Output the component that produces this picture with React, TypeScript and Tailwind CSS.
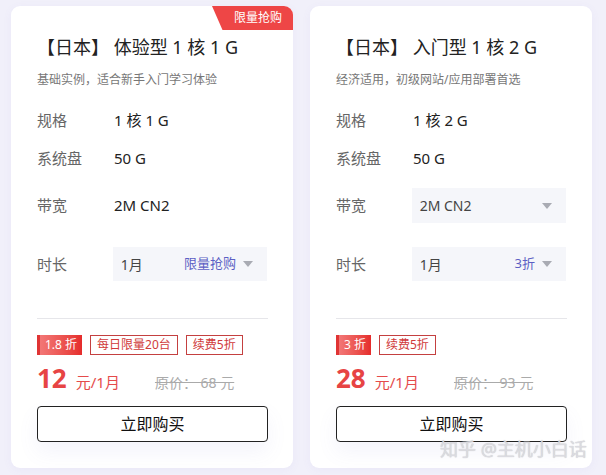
import React from "react";

const font = { fontFamily: '"Noto Sans", "Noto Sans CJK SC", sans-serif' };

type Plan = {
  title: string;
  desc: string;
  spec: string;
  disk: string;
  bw: string;
  bwSelect: boolean;
  tag: string;
  discount: string;
  badges: string[];
  price: string;
  orig: string;
  ribbon: boolean;
};

const plans: Plan[] = [
  {
    title: "【日本】 体验型 1 核 1 G",
    desc: "基础实例，适合新手入门学习体验",
    spec: "1 核 1 G",
    disk: "50 G",
    bw: "2M CN2",
    bwSelect: false,
    tag: "限量抢购",
    discount: "1.8 折",
    badges: ["每日限量20台", "续费5折"],
    price: "12",
    orig: "原价： 68 元",
    ribbon: true,
  },
  {
    title: "【日本】 入门型 1 核 2 G",
    desc: "经济适用，初级网站/应用部署首选",
    spec: "1 核 2 G",
    disk: "50 G",
    bw: "2M CN2",
    bwSelect: true,
    tag: "3折",
    discount: "3 折",
    badges: ["续费5折"],
    price: "28",
    orig: "原价： 93 元",
    ribbon: false,
  },
];

function Caret() {
  return <span className="ml-[7px] inline-block w-0 h-0 border-l-[5px] border-r-[5px] border-t-[6px] border-l-transparent border-r-transparent border-t-[#a9abb3]" />;
}

function Card({ p }: { p: Plan }) {
  return (
    <div className="relative w-[282px] h-[462px] bg-white rounded-[9px] shadow-[0_2px_10px_rgba(120,110,200,0.06)] overflow-hidden px-[26px] pt-[29px]">
      {p.ribbon && (
        <div className="absolute top-0 right-0 w-[81px] h-[24px] bg-[#ee4646] text-white text-[12px] leading-[24px] text-right pr-[11px] [clip-path:polygon(0_0,100%_0,100%_100%,13%_100%)]">
          限量抢购
        </div>
      )}
      <div className="text-[18px] leading-[24px] text-[#222]">{p.title}</div>
      <div className="mt-[12px] text-[12px] leading-[18px] text-[#777]">{p.desc}</div>

      <div className="mt-[19px] flex items-center h-[24px] text-[15px]">
        <span className="w-[77px] text-[#666]">规格</span>
        <span className="text-[#222]">{p.spec}</span>
      </div>
      <div className="mt-[14px] flex items-center h-[24px] text-[15px]">
        <span className="w-[77px] text-[#666]">系统盘</span>
        <span className="text-[#222]">{p.disk}</span>
      </div>
      <div className="mt-[18px] flex items-center h-[35px] text-[15px]">
        <span className="w-[76px] text-[#666]">带宽</span>
        {p.bwSelect ? (
          <div className="flex items-center w-[155px] h-[35px] bg-[#f5f6fa] px-[8px] text-[14px] text-[#444]">
            <span className="flex-1">{p.bw}</span>
            <Caret />
            <span className="w-[6px]" />
          </div>
        ) : (
          <span className="text-[#222] pl-[1px]">{p.bw}</span>
        )}
      </div>
      <div className="mt-[24px] flex items-center h-[34px] text-[15px]">
        <span className="w-[76px] text-[#666]">时长</span>
        <div className="flex items-center w-[155px] h-[34px] bg-[#f5f6fa] px-[8px] text-[14px] text-[#444]">
          <span className="flex-1">1月</span>
          <span className="text-[13px] text-[#5c5fc4]">{p.tag}</span>
          <Caret />
          <span className="w-[6px]" />
        </div>
      </div>

      <div className="mt-[37px] w-[231px] border-t border-[#e6e6ea]" />

      <div className="mt-[16px] flex items-center gap-[8px] h-[20px]">
        <span className="h-[20px] px-[5px] border-l-[3px] border-l-[#e03434] bg-gradient-to-r from-[#f27676] to-[#e52b2b] text-white text-[12px] leading-[20px]">
          {p.discount}
        </span>
        {p.badges.map((b) => (
          <span key={b} className="h-[20px] px-[6px] border border-[#c44040] text-[#d03a3a] text-[12px] leading-[18px]">
            {b}
          </span>
        ))}
      </div>

      <div className="mt-[8px] flex items-baseline h-[30px]">
        <span className="text-[26px] font-bold text-[#e74444] leading-[30px]">{p.price}</span>
        <span className="ml-[9px] text-[15px] text-[#e54b4b]">元/1月</span>
        <span className="ml-[35px] text-[14px] text-[#aaa] line-through">{p.orig}</span>
      </div>

      <button className="mt-[13px] w-[231px] h-[36px] border border-[#222] rounded-[4px] bg-white text-[16px] text-[#111] shadow-[0_10px_20px_rgba(120,110,200,0.08)]">
        立即购买
      </button>
    </div>
  );
}

export default function App() {
  return (
    <div style={font} className="relative w-[606px] h-[475px] bg-[#f1f0fa] flex gap-[17px] pl-[11px] pt-[6px] overflow-hidden">
      {plans.map((p) => (
        <Card key={p.title} p={p} />
      ))}
      <div className="absolute left-[440px] top-[437px] text-[18px] leading-[24px] text-[#d8d8de] opacity-90 [text-shadow:0_0_1px_#bbb]">
        知乎 @主机小白话
      </div>
    </div>
  );
}
